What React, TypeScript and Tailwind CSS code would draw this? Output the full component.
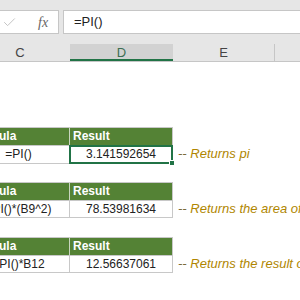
import { Check } from "lucide-react";

const tables = [
  { formula: "=PI()", result: "3.141592654", note: "Returns pi", selected: true },
  { formula: "=PI()*(B9^2)", result: "78.53981634", note: "Returns the area of a circle" },
  { formula: "=PI()*B12", result: "12.56637061", note: "Returns the result of pi times B12" },
];

const gaps = ["mt-[65px]", "mt-[18px]", "mt-[19px]"];

function PiTable({ formula, result, note, selected, gap }: { formula: string; result: string; note: string; selected?: boolean; gap: string }) {
  return (
    <div className={gap}>
      {/* header row */}
      <div className="flex h-[18px]">
        <div className="w-[102px] shrink-0 bg-[#548235] border-t border-[#c8c8c8] border-r border-r-[#c9d6bf] pl-[1px] text-white font-bold text-[12px] leading-[17px]">
          Formula
        </div>
        <div className="w-[103px] shrink-0 bg-[#548235] border-t border-r border-[#c8c8c8] pl-[3px] text-white font-bold text-[12px] leading-[17px]">
          Result
        </div>
      </div>
      {/* data row */}
      <div className={`flex ${selected ? "h-[19px]" : "h-[18px]"}`}>
        <div className="w-[102px] shrink-0 border-t border-b border-r border-[#c8c8c8] text-center text-[12px] leading-[17px] text-[#222] whitespace-nowrap">
          {formula}
        </div>
        <div className="relative w-[103px] shrink-0 border-t border-b border-r border-[#c8c8c8] text-center text-[12px] leading-[17px] text-[#222]">
          {result}
          {selected && (
            <>
              <div className="absolute -left-[1px] -top-[1px] -right-[1px] -bottom-[1px] border-2 border-[#217346]" />
              <div className="absolute -right-[3px] -bottom-[3px] w-[6px] h-[6px] bg-[#217346] border border-white" />
            </>
          )}
        </div>
        <div className="shrink-0 pl-[5px] whitespace-nowrap italic text-[13px] leading-[17px] text-[#b08600]">
          <span className="text-[#7a6a3a]">--</span> {note}
        </div>
      </div>
    </div>
  );
}

export default function App() {
  return (
    <div className="w-[300px] h-[300px] overflow-hidden bg-white" style={{ fontFamily: '"Liberation Sans", Arial, sans-serif' }}>
      {/* formula bar */}
      <div className="bg-[#e6e6e6] pt-[10px] pb-[10px] flex gap-[4px]">
        <div className="w-[59px] h-[24px] bg-white border-y border-r border-[#c6c6c6] flex items-center">
          <Check size={15} strokeWidth={1.6} className="text-[#c4c4c4] ml-[2px]" />
          <span className="ml-[21px] text-[14px] italic text-[#666]" style={{ fontFamily: '"Liberation Serif", serif' }}>
            fx
          </span>
        </div>
        <div className="flex-1 h-[24px] bg-white border-y border-l border-[#c6c6c6] pl-[10px] text-[13px] leading-[22px] text-[#222]">
          =PI()
        </div>
      </div>

      {/* sheet, scrolled so column C starts off to the left */}
      <div className="-ml-[32px] overflow-hidden">
        <div className="flex h-[18px] bg-[#e6e6e6] border-b border-[#c6c6c6] text-[13px] leading-[17px] text-[#444]">
          <div className="w-[102px] shrink-0 text-center pl-[2px]">C</div>
          <div className="w-[103px] shrink-0 text-center bg-[#d2d2d2] border-b-2 border-[#217346] text-[#3d6e52]">D</div>
          <div className="w-[102px] shrink-0 text-center border-r border-[#c6c6c6]">E</div>
          <div className="flex-1" />
        </div>

        {tables.map((t, i) => (
          <PiTable key={i} {...t} gap={gaps[i]} />
        ))}
      </div>
    </div>
  );
}
